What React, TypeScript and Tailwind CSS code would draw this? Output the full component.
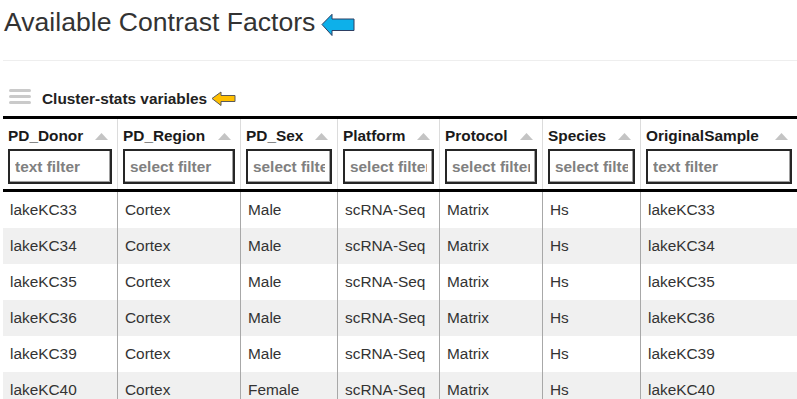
import React from "react";

const COLS = [
  { key: "PD_Donor", filter: "text filter" },
  { key: "PD_Region", filter: "select filter" },
  { key: "PD_Sex", filter: "select filter" },
  { key: "Platform", filter: "select filter" },
  { key: "Protocol", filter: "select filter" },
  { key: "Species", filter: "select filter" },
  { key: "OriginalSample", filter: "text filter" },
];

const ROWS = [
  ["lakeKC33", "Cortex", "Male", "scRNA-Seq", "Matrix", "Hs", "lakeKC33"],
  ["lakeKC34", "Cortex", "Male", "scRNA-Seq", "Matrix", "Hs", "lakeKC34"],
  ["lakeKC35", "Cortex", "Male", "scRNA-Seq", "Matrix", "Hs", "lakeKC35"],
  ["lakeKC36", "Cortex", "Male", "scRNA-Seq", "Matrix", "Hs", "lakeKC36"],
  ["lakeKC39", "Cortex", "Male", "scRNA-Seq", "Matrix", "Hs", "lakeKC39"],
  ["lakeKC40", "Cortex", "Female", "scRNA-Seq", "Matrix", "Hs", "lakeKC40"],
];

const GRID = "grid grid-cols-[114px_123px_97px_102px_103px_98px_157px]";

const SortUp = () => (
  <svg width="13" height="7" viewBox="0 0 13 7" className="mr-[4px] shrink-0">
    <polygon points="6.5,0 13,7 0,7" fill="#c4c4c4" />
  </svg>
);

const BlueArrow = () => (
  <svg width="34" height="24" viewBox="0 0 34 24" className="ml-[6px] mt-[6px]">
    <polygon
      points="1,11.5 11,1.3 11,6 33,6 33,17.5 11,17.5 11,22.5"
      fill="#0db0ea"
      stroke="#2d3f63"
      strokeWidth="1"
      strokeLinejoin="round"
    />
  </svg>
);

const OrangeArrow = () => (
  <svg width="25" height="16" viewBox="0 0 25 16" className="ml-[4px] mt-[2px]">
    <polygon
      points="1,7.5 10,1 10,4.5 24,4.5 24,10.5 10,10.5 10,14.5"
      fill="#ffbf00"
      stroke="#5a5a5a"
      strokeWidth="1"
      strokeLinejoin="round"
    />
  </svg>
);

export default function App() {
  return (
    <div className="min-h-screen bg-white pl-[3px] font-['Liberation_Sans',Arial,sans-serif] text-[#333]">
      {/* title */}
      <div className="flex items-start pt-[7px]">
        <h1 className="ml-[1px] text-[26.6px] leading-[30px] font-normal text-[#333]">
          Available Contrast Factors
        </h1>
        <BlueArrow />
      </div>
      <div className="mt-[23px] h-px w-[794px] bg-[#eeeeee]" />

      {/* section header */}
      <div className="mt-[28px] flex items-start">
        <div className="ml-[6px] flex flex-col gap-[3px]">
          <span className="h-[3px] w-[22px] rounded-sm bg-[#cacaca]" />
          <span className="h-[3px] w-[22px] rounded-sm bg-[#cacaca]" />
          <span className="h-[3px] w-[22px] rounded-sm bg-[#cacaca]" />
        </div>
        <span className="ml-[11px] pt-[1px] text-[15.4px] leading-[18px] font-bold text-[#222]">
          Cluster-stats variables
        </span>
        <OrangeArrow />
      </div>

      {/* table */}
      <div className="mt-[8px] w-[794px] overflow-hidden">
        <div className={`${GRID} border-y-[3px] border-black`}>
          {COLS.map((c, i) => (
            <div
              key={c.key}
              className={`px-[5px] pt-[8px] pb-[5px] ${i > 0 ? "border-l border-[#dcdcdc]" : ""}`}
            >
              <div className="mb-[4px] flex h-[18px] items-center justify-between">
                <span className="whitespace-nowrap text-[15.4px] leading-[18px] font-bold text-[#1a1a1a]">
                  {c.key}
                </span>
                <SortUp />
              </div>
              <input
                placeholder={c.filter}
                className="block h-[35px] w-full border-2 border-[#262626] bg-white pl-[5px] pr-[5px] text-[15.4px] font-bold text-[#333] shadow-[inset_-1px_-1px_0_#a0a0a0] outline-none placeholder:text-[#808080]"
              />
            </div>
          ))}
        </div>
        {ROWS.map((r, ri) => (
          <div key={ri} className={`${GRID} ${ri % 2 === 1 ? "bg-[#f0f0f0]" : "bg-white"}`}>
            {r.map((v, ci) => (
              <div
                key={ci}
                className={`flex h-[36px] items-center pl-[7px] text-[15.4px] text-[#333] ${ci > 0 ? "border-l border-[#a8a8a8]" : ""}`}
              >
                {v}
              </div>
            ))}
          </div>
        ))}
      </div>
    </div>
  );
}
